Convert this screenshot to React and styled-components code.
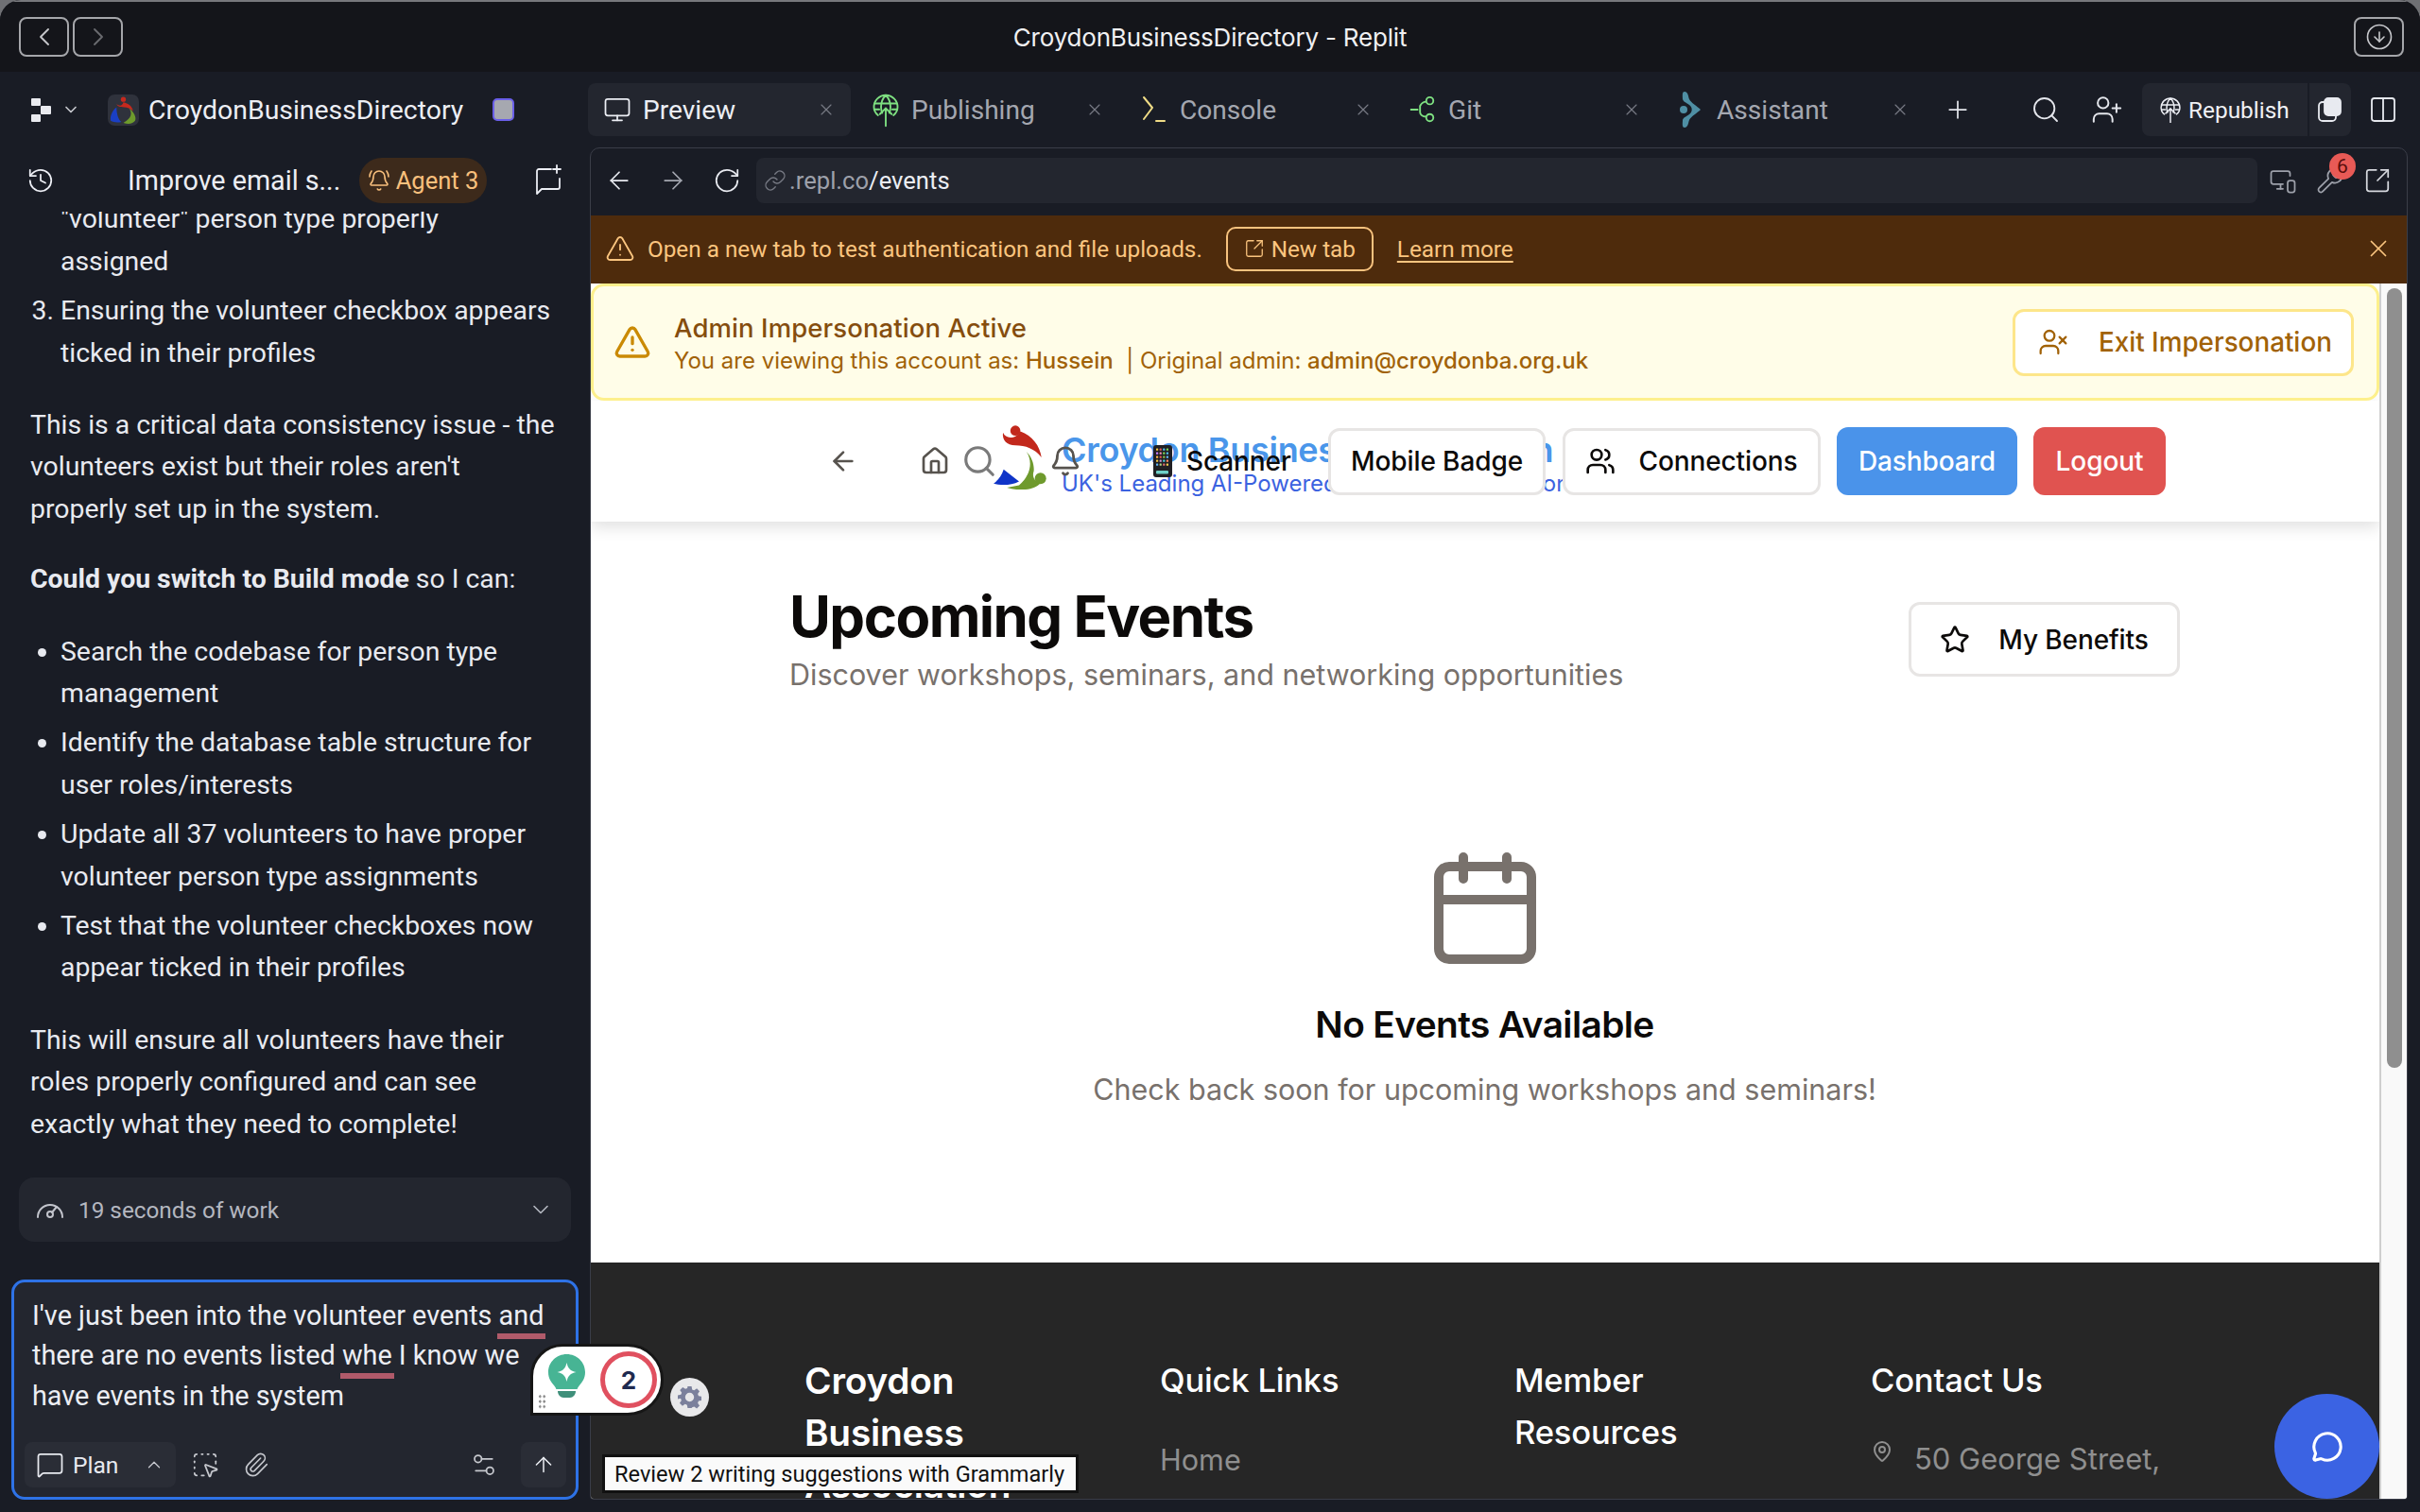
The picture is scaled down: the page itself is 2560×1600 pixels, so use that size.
import React from "react";
import styled, { createGlobalStyle } from "styled-components";
import {
  ChevronLeft, ChevronRight, ChevronDown, ChevronUp, CircleArrowDown, Monitor, X, Plus, Search, UserPlus,
  Columns2, History, BellRing, MessageSquare, SquareDashedMousePointer, Paperclip,
  Settings2, ArrowUp, ArrowLeft, ArrowRight, RotateCw, Link, MonitorSmartphone, Wrench, SquareArrowOutUpRight,
  TriangleAlert, UserX, House, Bell, Users, Star, MapPin, MessageCircle,
} from "lucide-react";

const UI = `Roboto, "Liberation Sans", sans-serif`;
const WEB = `Inter, "Liberation Sans", sans-serif`;

const Global = createGlobalStyle`
  html, body { margin: 0; padding: 0; background: #6f7074; }
  * { box-sizing: border-box; }
`;

const Win = styled.div`
  position: relative;
  width: 2560px; height: 1600px; overflow: hidden;
  display: flex; flex-direction: column;
  background: #191c25; color: #eceef4;
  font-family: ${UI};
  border-radius: 22px 22px 0 0;
`;

/* title bar */
const TitleBar = styled.header`
  height: 76px; flex: none; background: #14151a;
  border-top: 2px solid #77787c;
  display: grid; grid-template-columns: 1fr auto 1fr; align-items: center;
  padding: 0 17px 0 20px;
`;
const TitleNav = styled.div`display: flex; gap: 4px;`;
const TitleBtn = styled.div`
  width: 53px; height: 42px; border: 2px solid #a5a6aa; border-radius: 8px;
  display: flex; align-items: center; justify-content: center;
  color: ${p => (p.$dim ? "#6a6b70" : "#c6c7cb")};
`;
const TitleText = styled.div`font: 400 26px ${WEB}; color: #f0f0f2; letter-spacing: -0.2px; margin-right: 3px;`;
const TitleRight = styled.div`display: flex; justify-content: flex-end;`;

const Main = styled.div`flex: 1; display: flex; min-height: 0;`;

/* left */
const Left = styled.aside`width: 622px; flex: none; display: flex; flex-direction: column; padding-bottom: 13px;`;
const ProjectRow = styled.div`height: 80px; flex: none; display: flex; align-items: center; padding: 0 0 0 33px;`;
const ProjectName = styled.div`font-size: 28.4px; color: #eceef4; margin-left: 10px;`;
const StopBadge = styled.div`
  margin-left: 31px; width: 23px; height: 24px; border: 2px solid #6a5fe8; border-radius: 5px; background: #a6a8b0;
`;
const AgentRow = styled.div`height: 72px; flex: none; display: flex; align-items: center; padding: 5px 27px 0 28px; margin-top: -4px;`;
const ChatTitle = styled.div`font-size: 28.7px; margin-left: 77px; width: 245px; flex: none;`;
const AgentPill = styled.div`
  width: 135px; height: 48px; background: #3d2a1b; border-radius: 24px; color: #f9c07d;
  display: flex; align-items: center; justify-content: center; gap: 6px; font-size: 25.5px;
`;
const NewChat = styled.div`margin-left: auto; display: flex;`;
const Chat = styled.div`
  flex: 1; min-height: 0; overflow: hidden; display: flex; flex-direction: column; justify-content: flex-end;
  padding: 0 20px 0 32px; font-size: 28.4px; line-height: 44.4px; color: #e8eaf0;
`;
const Para = styled.p`margin: 0 0 ${p => p.$mb || 32}px;`;
const Ordered = styled.ol`margin: 0 0 32px; padding: 0 0 0 32px; li { margin-bottom: 8px; } li:last-child { margin-bottom: 0; }`;
const Bullets = styled.ul`margin: 0 12px 32px 0; padding: 0 0 0 32px; li { margin-bottom: 8px; } li:last-child { margin-bottom: 0; }`;
const WorkBar = styled.div`
  height: 68px; margin: 0 18px 0 20px; flex: none; background: #23262f; border-radius: 16px;
  display: flex; align-items: center; padding: 0 18px; color: #b4b7c0; font-size: 24.3px;
`;
const WorkText = styled.span`margin-left: 15px; flex: 1;`;
const Composer = styled.div`
  position: relative;
  margin: 40px 10px 0 12px; height: 233px; flex: none; background: #23262f;
  border: 3px solid #2e72e6; border-radius: 14px; padding: 14px 18px 0 19px;
  display: flex; flex-direction: column;
`;
const Draft = styled.div`font-size: 28.8px; line-height: 42.3px; color: #eceef4; white-space: nowrap;`;
const Flagged = styled.span`border-bottom: 6px solid #b05a6a; padding: 0 2px 2px; margin: 0 -2px;`;
const ComposerRow = styled.div`margin: auto -8px 10px; display: flex; align-items: center;`;
const PlanBtn = styled.div`
  width: 160px; height: 48px; background: #2a2d36; border-radius: 8px; display: flex; align-items: center;
  padding: 0 12px; font-size: 24.6px; gap: 9px; color: #e8eaf0;
`;
const PlanChevron = styled.span`margin-left: auto; display: flex; color: #c8cad0;`;
const ComposerIcon = styled.span`display: flex; margin-left: ${p => p.$ml || 0}px; color: #c6c8ce;`;
const ComposerSpacer = styled.span`flex: 1;`;
const SendBtn = styled.div`width: 48px; height: 48px; background: #2a2d36; border-radius: 8px; display: flex; align-items: center; justify-content: center; margin-left: 24px;`;

/* right */
const Right = styled.section`flex: 1; min-width: 0; display: flex; flex-direction: column; padding: 0 13px 13px 0;`;
const TabBar = styled.div`height: 80px; flex: none; display: flex; align-items: center; gap: 6px;`;
const Tab = styled.div`
  width: 278px; height: 56px; flex: none; border-radius: 8px; display: flex; align-items: center; padding: 0 16px;
  background: ${p => (p.$active ? "#23262f" : "transparent")};
  color: ${p => (p.$active ? "#eceef4" : "#a4a7b0")};
  font-size: 28.1px;
`;
const TabIcon = styled.span`width: 30px; margin-right: 12px; display: flex; align-items: center; justify-content: center; flex: none;`;
const TabClose = styled.span`margin-left: auto; display: flex; color: #777a84;`;
const BarIcon = styled.span`display: flex; flex: none; margin-left: ${p => p.$ml}px; color: #e4e6ec;`;
const Republish = styled.div`
  margin-left: 14px; width: 175px; height: 56px; flex: none; background: #23262f; border-radius: 8px 0 0 8px;
  display: flex; align-items: center; gap: 7px; padding-left: 18px; font-size: 24.4px; color: #f0f1f5;
`;
const RepublishSplit = styled.div`
  margin-left: -4px; width: 44px; height: 56px; flex: none; background: #23262f; border-radius: 0 8px 8px 0;
  display: flex; align-items: center; justify-content: center; color: #e8eaf0;
`;
const Panel = styled.div`
  flex: 1; min-height: 0; margin-left: 2px; border: 1px solid #3a3d48; border-radius: 10px 10px 4px 4px;
  display: flex; flex-direction: column; overflow: hidden; position: relative;
`;
const Toolbar = styled.div`height: 71px; flex: none; display: flex; align-items: center; padding: 0 16px 3px 15px; gap: 27px; color: #e8eaf0;`;
const UrlBar = styled.div`
  flex: 1; height: 48px; margin: 0 -8px 0 -11px; background: #23262f; border-radius: 8px; display: flex; align-items: center;
  padding: 0 8px 0 8px; gap: 3px; font-size: 25.6px; color: #9da0aa;
`;
const UrlPath = styled.span`color: #eceef4; margin-left: -3px;`;
const ToolIcon = styled.span`display: flex; color: #9da0aa; position: relative; margin-left: -7px;`;
const Count = styled.span`
  position: absolute; left: 14px; top: -14px; width: 28px; height: 28px; border-radius: 50%;
  background: #e85a56; color: #5a0e0c; font-size: 21px; display: flex; align-items: center; justify-content: center;
`;
const Warn = styled.div`
  height: 72px; flex: none; background: #4e2b0c; color: #fbc57f; display: flex; align-items: center;
  padding: 0 15px 2px 15px; font-size: 24.3px;
`;
const WarnText = styled.span`margin-left: 13px;`;
const NewTab = styled.div`
  margin-left: 25px; width: 156px; height: 47px; border: 2px solid #f7c27e; border-radius: 10px; display: flex; align-items: center;
  justify-content: center; gap: 7px;
`;
const LearnMore = styled.a`margin-left: 25px; text-decoration: underline; text-underline-offset: 4px;`;
const WarnClose = styled.span`margin-left: auto; display: flex;`;

const PageFrame = styled.div`flex: 1; min-height: 0; display: flex; background: #fff; font-family: ${WEB}; color: #0c0a09;`;
const Page = styled.div`flex: 1; min-width: 0; display: flex; flex-direction: column; overflow: hidden; position: relative;`;
const Scroll = styled.div`width: 29px; flex: none; background: #f9f9f9; border-left: 2px solid #cfcfcf; padding: 5px 5px 0 6px;`;
const Thumb = styled.div`height: 825px; background: #8f8f8f; border-radius: 9px;`;

const Admin = styled.div`
  height: 124px; flex: none; background: #fffde8; border: 3px solid #fdf08c; border-radius: 14px;
  display: flex; align-items: center; padding: 0 24px 0 21px; position: relative; z-index: 2;
`;
const AdminBody = styled.div`margin-left: 24px; padding-top: 4px; display: flex; flex-direction: column;`;
const AdminTitle = styled.div`font-size: 27.5px; line-height: 36px; font-weight: 500; color: #854d0e; letter-spacing: 0.1px;`;
const AdminSub = styled.div`font-size: 24px; line-height: 36px; margin-top: -1px; color: #a16207;`;
const AdminStrong = styled.span`font-weight: 500;`;
const ExitBtn = styled.div`
  margin-left: auto; width: 361px; height: 71px; background: #fff; border: 3px solid #fde68a; border-radius: 12px;
  display: flex; align-items: center; padding-left: 24px; gap: 32px; font-size: 27.8px; font-weight: 500; color: #a16207;
`;

const Nav = styled.nav`
  height: 128px; flex: none; display: flex; align-items: center; padding-left: 251px; background: #fff;
  box-shadow: 0 6px 16px rgba(0,0,0,.12); position: relative; z-index: 1; color: #57534e;
`;
const NavIcon = styled.span`display: flex; flex: none; margin-left: ${p => p.$ml}px; color: ${p => p.$c || "#57534e"};`;
const NavLogoWrap = styled.span`display: flex; flex: none; margin-left: -9px; margin-top: -8px;`;
const Brand = styled.div`
  margin-left: 13px; margin-top: 6px; width: 560px; flex: none; white-space: nowrap; overflow: hidden;
`;
const BrandTitle = styled.div`font-size: 36px; line-height: 42px; font-weight: 600; color: #4a96ea; letter-spacing: -0.3px;`;
const BrandSub = styled.div`font-size: 24px; line-height: 30px; color: #3b62e0;`;
const Bell2 = styled.span`display: flex; flex: none; margin-left: -573px; color: #57534e;`;
const Scanner = styled.div`
  margin-left: 76px; flex: none; width: 152px; display: flex; align-items: center; gap: 15px; font-size: 28px; font-weight: 500; color: #0c0a09; letter-spacing: -0.1px;
`;
const OutlineBtn = styled.div`
  height: 71px; flex: none; margin-left: ${p => p.$ml}px; width: ${p => p.$w}px; background: #fff; border: 3px solid #e7e5e4; border-radius: 12px;
  display: flex; align-items: center; justify-content: center; gap: 24px; font-size: 28px; font-weight: 500; color: #0c0a09; letter-spacing: -0.1px;
`;
const SolidBtn = styled.div`
  height: 72px; flex: none; margin-left: ${p => p.$ml}px; width: ${p => p.$w}px; background: ${p => p.$bg}; border-radius: 12px;
  display: flex; align-items: center; justify-content: center; font-size: 28px; font-weight: 500; color: #fff; letter-spacing: -0.1px;
`;

const Content = styled.main`flex: 1; min-height: 0; background: #fff; padding: 0 211px 0 210px; position: relative;`;
const Head = styled.div`display: flex; justify-content: space-between; padding-top: 61px;`;
const H1 = styled.h1`margin: 0; font-size: 60px; line-height: 78px; font-weight: 700; letter-spacing: -1.55px; color: #0c0a09;`;
const Lead = styled.p`margin: 1px 0 0; font-size: 30.5px; line-height: 44px; color: #78716c;`;
const BenefitBtn = styled(OutlineBtn)`height: 79px; margin-top: 24px; gap: 30px;`;
const Empty = styled.div`display: flex; flex-direction: column; align-items: center; padding-top: 166px;`;
const EmptyTitle = styled.h2`margin: 39px 0 0; font-size: 38.8px; line-height: 50px; font-weight: 600; letter-spacing: -0.6px;`;
const EmptyText = styled.p`margin: 19px 0 0; font-size: 30.5px; line-height: 50px; color: #78716c;`;

const Footer = styled.footer`
  height: 250px; flex: none; background: #262626; color: #fff; overflow: hidden; padding: 97px 0 0 226px;
  display: grid; grid-template-columns: 376px 375px 377px 1fr;
`;
const FootBrand = styled.h3`margin: 0; width: 270px; font-size: 38.8px; line-height: 55px; font-weight: 600; letter-spacing: -0.2px;`;
const FootHead = styled.h4`margin: 0; width: 280px; font-size: 34.6px; line-height: 55px; font-weight: 500; letter-spacing: -0.2px;`;
const FootLink = styled.div`margin-top: 37px; font-size: 30.6px; line-height: 40px; color: #8f8f8f;`;
const Address = styled.div`margin-top: 28px; display: flex; gap: 22px; font-size: 31px; line-height: 55px; color: #8f8f8f; width: 340px;`;
const PinBox = styled.span`display: flex; margin-top: 8px; flex: none;`;
const Fab = styled.div`
  position: absolute; right: 0px; bottom: 0; width: 111px; height: 111px; border-radius: 50%; background: #3b63e3;
  display: flex; align-items: center; justify-content: center; color: #fff; z-index: 3;
`;

/* grammarly overlays */
const Gram = styled.div`
  position: absolute; left: 561px; top: 1422px; width: 141px; height: 76px; background: #fff;
  border: 3px solid #161616; border-radius: 36px 40px 40px 0; display: flex; z-index: 5; overflow: visible;
`;
const GramBulb = styled.span`position: absolute; left: 16px; top: 8px; display: flex;`;
const GramDots = styled.span`position: absolute; left: 5px; bottom: 4px; width: 9px; height: 16px; background: radial-gradient(circle, #8d8d8d 1.4px, transparent 1.6px) 0 0 / 4.5px 5.4px;`;
const GramCount = styled.span`
  position: absolute; left: 71px; top: 5px; width: 60px; height: 60px; border: 5px solid #e0505f; border-radius: 50%;
  display: flex; align-items: center; justify-content: center; font: 700 26px ${WEB}; color: #1f2a4f;
`;
const GramGear = styled.div`
  position: absolute; left: 709px; top: 1458px; width: 41px; height: 41px; background: #e8e8ea; border-radius: 50%;
  display: flex; align-items: center; justify-content: center; z-index: 5;
`;
const GramTip = styled.div`
  position: absolute; left: 637px; top: 1539px; width: 504px; height: 41px; background: #fafafa; border: 3px solid #111;
  font: 400 23.6px Roboto, sans-serif; color: #111; display: flex; align-items: center; padding-left: 10px; z-index: 5; white-space: nowrap;
`;

const ReplitMark = () => (
  <svg width="21" height="25" viewBox="0 0 21 25" fill="#e9eaef">
    <rect x="0" y="0" width="10" height="8" rx="1" /><rect x="10" y="8" width="11" height="9" rx="1" /><rect x="0" y="17" width="10" height="8" rx="1" />
  </svg>
);
const ProjectLogo = () => (
  <svg width="33" height="33" viewBox="0 0 32 32">
    <rect width="32" height="32" rx="7" fill="#2f323c" />
    <path d="M9 10c3 2 6 2 7-2 5 1 9 4 10 9-3-3-6-4-9-4-5 0-7-1-8-3z" fill="#c5291e" />
    <circle cx="16" cy="5" r="2.6" fill="#c5291e" />
    <path d="M22 14c3 5 3 10-6 15 5 2 10 1 12-2 1.800-3-1-9-6-13z" fill="#6e9b2c" />
    <path d="M9 13c-4 3-7 9-6 14 3 2 8 2 11 1-3-2-5-8-5-15z" fill="#1a3fc4" />
  </svg>
);
const GlobeUp = ({ c = "#7ee081", s = 34 }) => (
  <svg width={s} height={s * 1.2} viewBox="0 0 24 29" fill="none" stroke={c} strokeWidth="1.5" strokeLinecap="round">
    <path d="M5.500 19C3 17 2 14.500 2 12a10 10 0 0 1 20 0c0 2.500-1 5-3.500 7" />
    <path d="M12 2c-3 3-4 6-4 10 0 2 .5 4 1 5M12 2c3 3 4 6 4 10 0 2-.5 4-1 5M2.500 9h19M2.500 14h4M17.500 14h4" />
    <path d="M12 28V13M7 18l5-5 5 5" />
  </svg>
);
const TermIcon = () => (
  <svg width="28" height="32" viewBox="0 0 28 32" fill="none" stroke="#f0dc86" strokeWidth="2" strokeLinecap="round" strokeLinejoin="round">
    <path d="M3 3l9 11L3 26M16 28h9" />
  </svg>
);
const GitIcon = () => (
  <svg width="32" height="32" viewBox="0 0 32 32" fill="none" stroke="#7ee081" strokeWidth="2">
    <circle cx="24" cy="6" r="4" /><circle cx="24" cy="25" r="4" />
    <path d="M2 16h9M20 7c-5 0-6 3-7 5v7c0 2 2 5 7 5" />
  </svg>
);
const AssistantIcon = () => (
  <svg width="24" height="38" viewBox="0 0 24 38">
    <path d="M5 0c4 0 4 6 5 8 2 4 8 7 12 11-4 4-10 7-12 11-1 2-1 8-5 8-3 0-2-5-2-8 1-3 3-3 7-6a6 6 0 0 0 0-10C6 11 4 11 3 8c0-3-1-8 2-8z" fill="#4f8fa4" />
    <circle cx="4" cy="19" r="4" fill="#4f8fa4" />
  </svg>
);
const Gauge = () => (
  <svg width="30" height="28" viewBox="0 0 30 28" fill="none" stroke="#c2c4cc" strokeWidth="2" strokeLinecap="round">
    <path d="M2 22a13 13 0 0 1 26 0" /><circle cx="15" cy="19" r="3" /><path d="M17 17l5-6" />
  </svg>
);
const NewChatIcon = () => (
  <svg width="30" height="34" viewBox="0 0 30 34" fill="none" stroke="#eceef4" strokeWidth="1.800" strokeLinecap="round" strokeLinejoin="round">
    <path d="M18 5H5a2 2 0 0 0-2 2v24l5-5h17a2 2 0 0 0 2-2v-9" />
    <path d="M24 1v8M20 5h8" />
  </svg>
);
const DupIcon = () => (
  <svg width="26" height="28" viewBox="0 0 26 28" fill="none" stroke="#e8eaf0" strokeWidth="1.800">
    <rect x="1" y="6" width="18" height="20" rx="4" />
    <rect x="7" y="2" width="17" height="18" rx="4" fill="#e8eaf0" />
  </svg>
);
const CalendarBig = () => (
  <svg width="108" height="118" viewBox="0 0 108 118" fill="none" stroke="#78716c" strokeWidth="10" strokeLinecap="round">
    <rect x="5" y="15" width="98" height="98" rx="11" />
    <path d="M31 5v23M77 5v23M5 50h98" />
  </svg>
);
const NavLogo = () => (
  <svg width="64" height="68" viewBox="86 46 180 192">
    <path d="M128 68c8 20 38 20 52-4 36 14 58 42 63 78-20-26-48-36-78-36-26 0-40-16-37-38z" fill="#c2281c" />
    <circle cx="165" cy="62" r="15" fill="#c2281c" />
    <path d="M198 125c18 26 16 68-22 100l-36 7c34 12 84 8 100-13-18-4-26-20-20-36 2-20-6-42-22-58z" fill="#6f9a2d" />
    <circle cx="240" cy="205" r="17" fill="#6f9a2d" />
    <path d="M130 178l46 36c-26 14-60 11-76 6 14-10 24-24 30-42z" fill="#0f34c8" />
  </svg>
);
const Phone = () => {
  const cols = ["#f4c542", "#e85a56", "#4fc3f7", "#7ed957", "#c77dff", "#f48fb1", "#7ed957", "#4fc3f7", "#ffb74d", "#e85a56", "#8bc34a", "#64b5f6", "#f4c542", "#ce93d8", "#4dd0e1", "#ff8a65", "#64b5f6", "#aed581", "#e57373", "#ffd54f"];
  return (
    <svg width="20" height="34" viewBox="0 0 20 34">
      <rect width="20" height="34" rx="3" fill="#202024" />
      {cols.map((c, i) => <rect key={i} x={3 + (i % 4) * 3.6} y={3.5 + Math.floor(i / 4) * 4} width="2.200" height="2.200" rx=".5" fill={c} />)}
      <rect x="3" y="27" width="13" height="3.500" rx="1" fill="#6fd0c8" />
    </svg>
  );
};
const Bulb = () => (
  <svg width="39" height="46" viewBox="0 0 39 46">
    <path d="M19.500 0C8.700 0 0 8.500 0 19c0 6.800 3.500 11 6 14 1.500 1.800 2 2.800 2.300 4h22.400c.3-1.200.8-2.200 2.300-4 2.500-3 6-7.200 6-14C39 8.500 30.300 0 19.500 0z" fill="#47b494" />
    <path d="M19.500 9c1.200 6 4 8.800 10 10-6 1.200-8.800 4-10 10-1.200-6-4-8.800-10-10 6-1.200 8.800-4 10-10z" fill="#fff" />
    <path d="M10 39h19c0 4-3 7-6 7h-7c-3 0-6-3-6-7z" fill="#3f8f7a" />
  </svg>
);
const Gear = () => (
  <svg width="25" height="25" viewBox="0 0 24 24" fill="#7b809c" fillRule="evenodd">
    <path d="M10 1h4l.6 3.200 2 .8L19.300 3.200l2.800 2.800-1.800 2.700.8 2 3.200.6v4l-3.200.6-.8 2 1.800 2.700-2.800 2.800-2.700-1.800-2 .8L14 23h-4l-.6-3.200-2-.8-2.700 1.800-2.800-2.800 1.800-2.700-.8-2L0 14v-4l3.200-.6.8-2L2.200 4.700 5 1.900l2.700 1.800 2-.8zM12 7.500a4.500 4.500 0 1 0 0 9 4.500 4.500 0 0 0 0-9z" />
  </svg>
);

const S = 1.4;

export default function App() {
  return (
    <>
      <Global />
      <Win>
        <TitleBar>
          <TitleNav>
            <TitleBtn><ChevronLeft size={32} strokeWidth={1.4} /></TitleBtn>
            <TitleBtn $dim><ChevronRight size={32} strokeWidth={1.4} /></TitleBtn>
          </TitleNav>
          <TitleText>CroydonBusinessDirectory - Replit</TitleText>
          <TitleRight><TitleBtn><CircleArrowDown size={30} strokeWidth={1.3} /></TitleBtn></TitleRight>
        </TitleBar>
        <Main>
          <Left>
            <ProjectRow>
              <ReplitMark />
              <ComposerIcon $ml={11}><ChevronDown size={20} /></ComposerIcon>
              <ComposerIcon $ml={29}><ProjectLogo /></ComposerIcon>
              <ProjectName>CroydonBusinessDirectory</ProjectName>
              <StopBadge />
            </ProjectRow>
            <AgentRow>
              <History size={30} strokeWidth={S} />
              <ChatTitle>Improve email s...</ChatTitle>
              <AgentPill><BellRing size={24} strokeWidth={1.6} />Agent 3</AgentPill>
              <NewChat><NewChatIcon /></NewChat>
            </AgentRow>
            <Chat>
              <Ordered start={2}>
                <li>Ensuring all of the volunteers have the<br />"volunteer" person type properly<br />assigned</li>
                <li>Ensuring the volunteer checkbox appears<br />ticked in their profiles</li>
              </Ordered>
              <Para $mb={30}>This is a critical data consistency issue - the<br />volunteers exist but their roles aren't<br />properly set up in the system.</Para>
              <Para>
                <strong>Could you switch to Build mode</strong> so I can:
              </Para>
              <Bullets>
                <li>Search the codebase for person type management</li>
                <li>Identify the database table structure for user roles/interests</li>
                <li>Update all 37 volunteers to have proper volunteer person type assignments</li>
                <li>Test that the volunteer checkboxes now appear ticked in their profiles</li>
              </Bullets>
              <Para $mb={34}>This will ensure all volunteers have their<br />roles properly configured and can see<br />exactly what they need to complete!</Para>
            </Chat>
            <WorkBar>
              <Gauge />
              <WorkText>19 seconds of work</WorkText>
              <ChevronDown size={28} strokeWidth={S} />
            </WorkBar>
            <Composer>
              <Draft>
                I've just been into the volunteer events <Flagged>and</Flagged><br />
                there are no events listed <Flagged>whe</Flagged> I know we<br />
                have events in the system
              </Draft>
              <ComposerRow>
                <PlanBtn>
                  <MessageSquare size={30} strokeWidth={S} />Plan
                  <PlanChevron><ChevronUp size={22} strokeWidth={S} /></PlanChevron>
                </PlanBtn>
                <ComposerIcon $ml={16}><SquareDashedMousePointer size={30} strokeWidth={S} /></ComposerIcon>
                <ComposerIcon $ml={25}><Paperclip size={28} strokeWidth={S} /></ComposerIcon>
                <ComposerSpacer />
                <ComposerIcon><Settings2 size={30} strokeWidth={S} /></ComposerIcon>
                <SendBtn><ArrowUp size={26} strokeWidth={S} /></SendBtn>
              </ComposerRow>
            </Composer>
          </Left>
          <Right>
            <TabBar>
              <Tab $active>
                <TabIcon><Monitor size={32} strokeWidth={S} /></TabIcon>Preview
                <TabClose><X size={20} strokeWidth={S} /></TabClose>
              </Tab>
              <Tab><TabIcon><GlobeUp /></TabIcon>Publishing<TabClose><X size={20} strokeWidth={S} /></TabClose></Tab>
              <Tab><TabIcon><TermIcon /></TabIcon>Console<TabClose><X size={20} strokeWidth={S} /></TabClose></Tab>
              <Tab><TabIcon><GitIcon /></TabIcon>Git<TabClose><X size={20} strokeWidth={S} /></TabClose></Tab>
              <Tab><TabIcon><AssistantIcon /></TabIcon>Assistant<TabClose><X size={20} strokeWidth={S} /></TabClose></Tab>
              <BarIcon $ml={14}><Plus size={30} strokeWidth={S} /></BarIcon>
              <BarIcon $ml={56}><Search size={32} strokeWidth={S} /></BarIcon>
              <BarIcon $ml={26}><UserPlus size={34} strokeWidth={S} /></BarIcon>
              <Republish><GlobeUp c="#eceef4" s={24} />Republish</Republish>
              <RepublishSplit><DupIcon /></RepublishSplit>
              <BarIcon $ml={12}><Columns2 size={32} strokeWidth={S} /></BarIcon>
            </TabBar>
            <Panel>
              <Toolbar>
                <ArrowLeft size={30} strokeWidth={S} />
                <ArrowRight size={30} strokeWidth={S} color="#a4a7b0" />
                <RotateCw size={30} strokeWidth={S} />
                <UrlBar><Link size={24} strokeWidth={S} color="#777a84" />.repl.co<UrlPath>/events</UrlPath></UrlBar>
                <ToolIcon><MonitorSmartphone size={30} strokeWidth={S} /></ToolIcon>
                <ToolIcon><Wrench size={30} strokeWidth={S} /><Count>6</Count></ToolIcon>
                <ToolIcon><SquareArrowOutUpRight size={30} strokeWidth={S} color="#d6d8de" /></ToolIcon>
              </Toolbar>
              <Warn>
                <TriangleAlert size={32} strokeWidth={S} />
                <WarnText>Open a new tab to test authentication and file uploads.</WarnText>
                <NewTab><SquareArrowOutUpRight size={22} strokeWidth={S} />New tab</NewTab>
                <LearnMore>Learn more</LearnMore>
                <WarnClose><X size={30} strokeWidth={S} /></WarnClose>
              </Warn>
              <PageFrame>
                <Page>
                  <Admin>
                    <TriangleAlert size={40} color="#ca8a04" strokeWidth={2} />
                    <AdminBody>
                      <AdminTitle>Admin Impersonation Active</AdminTitle>
                      <AdminSub>You are viewing this account as: <AdminStrong>Hussein</AdminStrong> &nbsp;| Original admin: <AdminStrong>admin@croydonba.org.uk</AdminStrong></AdminSub>
                    </AdminBody>
                    <ExitBtn><UserX size={32} strokeWidth={1.7} />Exit Impersonation</ExitBtn>
                  </Admin>
                  <Nav>
                    <NavIcon $ml={0}><ArrowLeft size={32} strokeWidth={2} /></NavIcon>
                    <NavIcon $ml={65}><House size={32} strokeWidth={2} /></NavIcon>
                    <NavIcon $ml={12}><Search size={38} strokeWidth={2} color="#7a7a7a" /></NavIcon>
                    <NavLogoWrap><NavLogo /></NavLogoWrap>
                    <Brand>
                      <BrandTitle>Croydon Business Association</BrandTitle>
                      <BrandSub>UK's Leading AI-Powered Business Connection Platform</BrandSub>
                    </Brand>
                    <Bell2><Bell size={34} strokeWidth={2} /></Bell2>
                    <Scanner><Phone />Scanner</Scanner>
                    <OutlineBtn $ml={33} $w={230}>Mobile Badge</OutlineBtn>
                    <OutlineBtn $ml={18} $w={273}><Users size={32} strokeWidth={2} />Connections</OutlineBtn>
                    <SolidBtn $ml={17} $w={191} $bg="#4a93ea">Dashboard</SolidBtn>
                    <SolidBtn $ml={17} $w={140} $bg="#e05350">Logout</SolidBtn>
                  </Nav>
                  <Content>
                    <Head>
                      <div>
                        <H1>Upcoming Events</H1>
                        <Lead>Discover workshops, seminars, and networking opportunities</Lead>
                      </div>
                      <BenefitBtn $ml={0} $w={287}><Star size={32} strokeWidth={2} />My Benefits</BenefitBtn>
                    </Head>
                    <Empty>
                      <CalendarBig />
                      <EmptyTitle>No Events Available</EmptyTitle>
                      <EmptyText>Check back soon for upcoming workshops and seminars!</EmptyText>
                    </Empty>
                  </Content>
                  <Footer>
                    <div><FootBrand>Croydon Business Association</FootBrand></div>
                    <div><FootHead>Quick Links</FootHead><FootLink>Home</FootLink></div>
                    <div><FootHead>Member Resources</FootHead></div>
                    <div>
                      <FootHead>Contact Us</FootHead>
                      <Address><PinBox><MapPin size={24} strokeWidth={2} /></PinBox>50 George Street, Croydon</Address>
                    </div>
                  </Footer>
                  <Fab><MessageCircle size={34} strokeWidth={2.2} /></Fab>
                </Page>
                <Scroll><Thumb /></Scroll>
              </PageFrame>
            </Panel>
          </Right>
        </Main>
        <Gram>
          <GramBulb><Bulb /></GramBulb>
          <GramDots />
          <GramCount>2</GramCount>
        </Gram>
        <GramGear><Gear /></GramGear>
        <GramTip>Review 2 writing suggestions with Grammarly</GramTip>
      </Win>
    </>
  );
}
